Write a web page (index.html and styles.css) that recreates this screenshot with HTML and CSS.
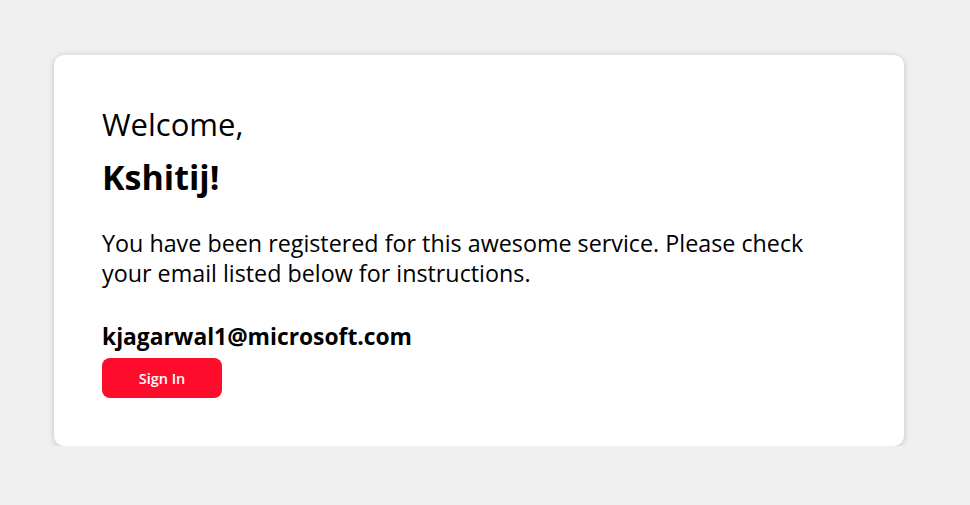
FILE: index.html
```html
<!DOCTYPE html>
<html>
<head>
<meta charset="utf-8">
<link rel="stylesheet" href="styles.css">
</head>
<body>
<main class="page">
  <section class="card">
    <div class="welcome">Welcome,</div>
    <h1 class="name">Kshitij!</h1>
    <p class="message">You have been registered for this awesome service. Please check your email listed below for instructions.</p>
    <div class="email">kjagarwal1@microsoft.com</div>
    <button class="signin">Sign In</button>
  </section>
</main>
</body>
</html>
```

FILE: styles.css
```css
html, body {
  margin: 0;
  padding: 0;
  background: #f0f0f0;
}
body {
  font-family: "Open Sans", "Noto Sans", sans-serif;
  color: #000;
}
.page {
  padding: 55px 66px 0 54px;
}
.card {
  box-sizing: border-box;
  width: 850px;
  height: 391px;
  background: #fff;
  border-radius: 10px;
  box-shadow: 0 1px 6px rgba(0,0,0,0.2);
  padding: 48px 48px;
  display: flex;
  flex-direction: column;
  align-items: flex-start;
}
.welcome {
  font-size: 31px;
  line-height: 42px;
  margin: 0;
}
.name {
  font-size: 34px;
  font-weight: 700;
  line-height: 44px;
  margin: 10px 0 0;
}
.message {
  font-size: 23.3px;
  line-height: 29.5px;
  margin: 30px 0 0;
  max-width: 705px;
}
.email {
  font-size: 22.8px;
  font-weight: 700;
  line-height: 30px;
  margin: 34px 0 0;
}
.signin {
  margin-top: 6px;
  width: 120px;
  height: 40px;
  border: none;
  border-radius: 8px;
  background: #ff0c2d;
  color: #fff;
  font-family: inherit;
  font-size: 14.5px;
  font-weight: 600;
}
```
